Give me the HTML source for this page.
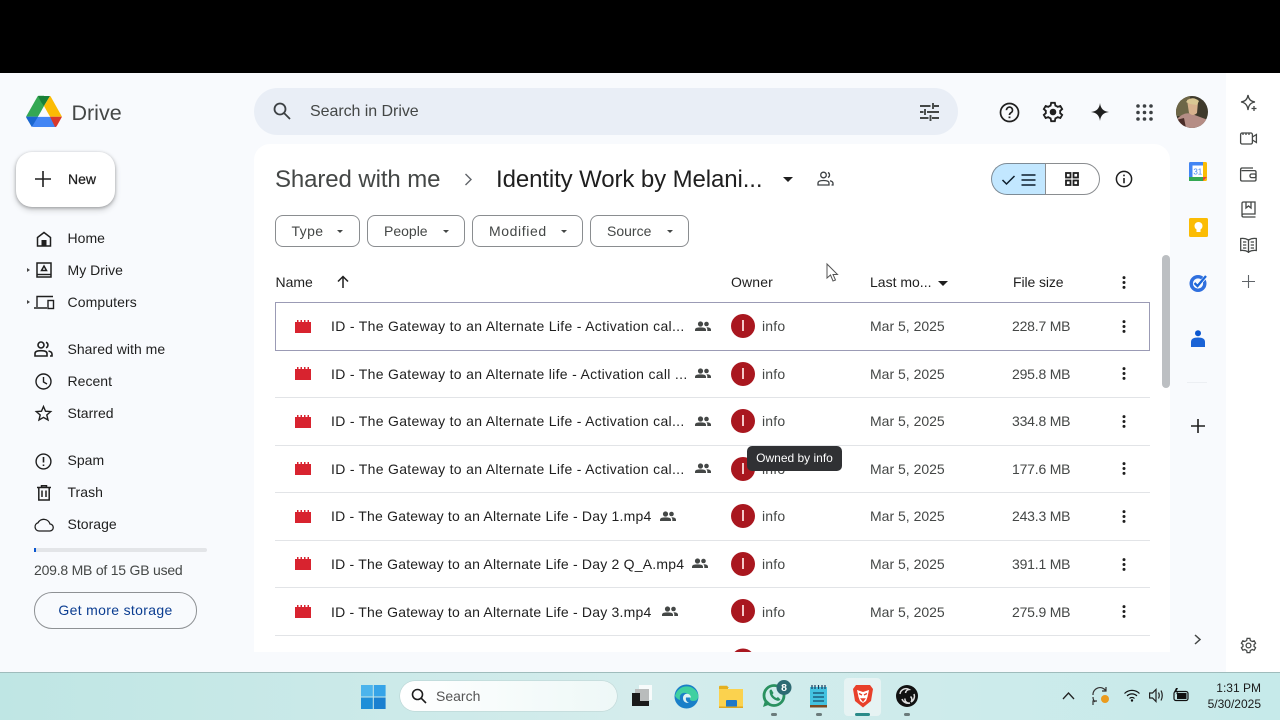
<!DOCTYPE html>
<html><head><meta charset="utf-8"><style>
html,body{margin:0;padding:0;width:1280px;height:720px;overflow:hidden;background:#f8fafd;font-family:"Liberation Sans",sans-serif;color:#1f1f1f}
.a{position:absolute;white-space:nowrap}
svg{position:absolute;overflow:visible}
.nav{position:absolute;left:67.5px;font-size:14px;color:#1f1f1f;line-height:20px;letter-spacing:.03px}
.row{position:absolute;left:275px;width:875px;height:47px;border-bottom:1px solid #e2e4e7}
.nm{position:absolute;left:56px;top:14px;font-size:14px;line-height:20px;color:#1f1f1f;white-space:nowrap;letter-spacing:.21px}
.nm.l{letter-spacing:.31px}
.av{position:absolute;left:456px;top:12px;width:24px;height:24px;border-radius:50%;background:#a9171f}
.av:after{content:"";position:absolute;left:11px;top:6px;width:1.6px;height:11px;background:#f3c9c9}
.inf{position:absolute;left:487px;top:14px;font-size:14px;line-height:20px;color:#444746;letter-spacing:.2px}
.dt{position:absolute;left:595px;top:14px;font-size:14px;line-height:20px;color:#444746;letter-spacing:0}
.sz{position:absolute;left:737px;top:14px;font-size:14px;line-height:20px;color:#444746;letter-spacing:-.2px}
.chip{position:absolute;top:215px;height:30px;border:1px solid #8a8d90;border-radius:8px;background:#fff;font-size:14px;line-height:30px;color:#444746;box-sizing:content-box}
.chip span{position:absolute;left:16px;top:0}
.chip i{position:absolute;top:14px;border-left:3.5px solid transparent;border-right:3.5px solid transparent;border-top:3.5px solid #444746}
.hd{position:absolute;top:272px;font-size:14px;line-height:20px;color:#1f1f1f}
</style></head><body>
<div class="a" style="left:0;top:0;width:1280px;height:73px;background:#000"></div>
<div class="a" style="left:0;top:73px;width:1280px;height:599px;background:#f8fafd"></div>
<div class="a" style="left:1226px;top:73px;width:54px;height:599px;background:#fff"></div>
<div class="a" style="left:254px;top:144px;width:916px;height:508px;background:#fff;border-radius:16px 16px 0 0"></div>

<!-- logo -->
<svg style="left:26px;top:95px" width="36" height="33" viewBox="0 0 36 33">
<path d="M11.500 1.500Q12 .8 13 .8H18V11L12 21.800H0Z" fill="#34a853"/>
<path d="M12 1H24L18 11 15 7Z" fill="#188038"/>
<path d="M24 1Q24.400 1.200 24.800 1.800L36 21.800H24L18 11Z" fill="#fbbc04"/>
<path d="M12 21.800H24L30.200 32H7.500Q6.300 32 5.800 31.400L0 21.800Z" fill="#4285f4"/>
<path d="M0 21.800H7.500L12 21.800 5.800 32 .5 23Z" fill="#1a66cf"/>
<path d="M24 21.800H36L30.800 31Q30.300 32 29 32Z" fill="#d9382c"/>
<path d="M18 12.300 24 21.800H12Z" fill="#f8fafd"/>
</svg>
<div class="a" style="left:71.5px;top:99px;font-size:21.5px;line-height:28px;color:#444746">Drive</div>

<!-- New -->
<div class="a" style="left:16px;top:152px;width:99px;height:55px;background:#fff;border-radius:16px;box-shadow:0 1px 3px rgba(0,0,0,.3),0 3px 6px 1px rgba(0,0,0,.13)"></div>
<svg style="left:35px;top:171px" width="16" height="16"><path d="M8 0V16M0 8H16" stroke="#1f1f1f" stroke-width="1.6"/></svg>
<div class="a" style="left:68px;top:169px;font-size:14px;line-height:20px;font-weight:400;color:#1f1f1f;-webkit-text-stroke:.25px #1f1f1f">New</div>

<!-- sidebar icons -->
<svg style="left:36px;top:231px" width="16" height="16" fill="none" stroke="#1f1f1f" stroke-width="1.5"><path d="M1.500 6.500 8 1.500 14.500 6.500V15H1.500Z"/><rect x="5.500" y="9" width="5" height="6" fill="#1f1f1f" stroke="none"/></svg>
<div class="nav" style="top:228px">Home</div>
<div class="a" style="left:27px;top:268px;border-left:3px solid #444;border-top:2.5px solid transparent;border-bottom:2.5px solid transparent"></div>
<svg style="left:36px;top:262px" width="16" height="16" fill="none" stroke="#1f1f1f" stroke-width="1.5"><rect x="1" y="1" width="14" height="14"/><path d="M1 12.500H15" stroke-width="1.400"/><path d="M8 4 10.500 8.500H5.500Z" stroke-width="1.500"/></svg>
<div class="nav" style="top:260px">My Drive</div>
<div class="a" style="left:27px;top:300px;border-left:3px solid #444;border-top:2.5px solid transparent;border-bottom:2.5px solid transparent"></div>
<svg style="left:34px;top:295px" width="21" height="15" fill="none" stroke="#1f1f1f" stroke-width="1.4"><path d="M3 12V1.500H19M0 13H13"/><rect x="14" y="5.500" width="5.500" height="8"/></svg>
<div class="nav" style="top:291.5px;letter-spacing:.1px">Computers</div>
<svg style="left:34px;top:341px" width="19" height="16" fill="none" stroke="#1f1f1f" stroke-width="1.600"><circle cx="7" cy="4" r="3"/><path d="M1 15V12.500Q1 9.700 7 9.700T13 12.500V15ZM12 1.200A3 3 0 0 1 12 6.800M14.500 10Q18 10.800 18 13V15H16"/></svg>
<div class="nav" style="top:339px">Shared with me</div>
<svg style="left:35px;top:373px" width="17" height="17" fill="none" stroke="#1f1f1f" stroke-width="1.4"><circle cx="8.500" cy="8.500" r="7.500"/><path d="M8.500 4V9L12 11"/></svg>
<div class="nav" style="top:371px">Recent</div>
<svg style="left:35px;top:405px" width="17" height="16" fill="none" stroke="#1f1f1f" stroke-width="1.4"><path d="M8.500 1.500 10.500 6.200 15.700 6.600 11.800 10 13 15 8.500 12.400 4 15 5.200 10 1.300 6.600 6.500 6.200Z"/></svg>
<div class="nav" style="top:403px">Starred</div>
<svg style="left:35px;top:453px" width="17" height="17" fill="none" stroke="#1f1f1f" stroke-width="1.4"><circle cx="8.500" cy="8.500" r="7.400"/><path d="M8.500 4V9.500M8.500 11.500V13" stroke-width="1.600"/></svg>
<div class="nav" style="top:450px">Spam</div>
<svg style="left:37px;top:485px" width="14" height="16" fill="none" stroke="#1f1f1f" stroke-width="1.5"><path d="M0 2.500H14M4.500 2.500V.7H9.500V2.500M1.800 2.500V15H12.200V2.500M5 5.500V12M9 5.500V12"/></svg>
<div class="nav" style="top:482px">Trash</div>
<svg style="left:34px;top:518px" width="20" height="14" fill="none" stroke="#1f1f1f" stroke-width="1.3"><path d="M5 13H15.500A3.500 3.500 0 0 0 16 6 6.500 6.500 0 0 0 4 4.800 4.200 4.200 0 0 0 5 13Z"/></svg>
<div class="nav" style="top:514px">Storage</div>
<div class="a" style="left:34px;top:548px;width:173px;height:4px;background:#e3e5e8;border-radius:2px"></div>
<div class="a" style="left:34px;top:548px;width:2px;height:4px;background:#0b57d0"></div>
<div class="a" style="left:34px;top:560px;font-size:14px;line-height:20px;color:#444746;letter-spacing:-.22px">209.8 MB of 15 GB used</div>
<div class="a" style="left:34px;top:592px;width:161px;height:35px;border:1px solid #8e9194;border-radius:18px;text-align:center;line-height:35px;font-size:14px;color:#0b3d91;letter-spacing:.33px">Get more storage</div>

<!-- search -->
<div class="a" style="left:254px;top:88px;width:704px;height:47px;background:#e9eef6;border-radius:24px"></div>
<svg style="left:273px;top:102px" width="18" height="18" fill="none" stroke="#3c4043" stroke-width="1.8"><circle cx="7" cy="7" r="5.500"/><path d="M11 11 17 17"/></svg>
<div class="a" style="left:310px;top:102px;font-size:16px;line-height:20px;color:#444746;letter-spacing:-.05px">Search in Drive</div>
<svg style="left:920px;top:103px" width="19" height="18" fill="none" stroke="#444746" stroke-width="1.9"><path d="M0 3H10.500M14 3H19M13 0V6M0 9H3.500M7 9H19M5 6V12M0 15H8.500M12 15H19M10.500 12V18"/></svg>

<!-- top right -->
<svg style="left:999px;top:102px" width="21" height="21" fill="none" stroke="#1f1f1f" stroke-width="1.7"><circle cx="10.500" cy="10.500" r="9"/><path d="M7.500 8.200A3 3 0 1 1 12 10.700C11 11.300 10.500 11.800 10.500 13"/><path d="M10.500 14.500V16.200" stroke-width="1.900"/></svg>
<svg style="left:1042px;top:101px" width="22" height="22" viewBox="0 0 24 24" fill="none" stroke="#1f1f1f" stroke-width="2"><path d="M10 2H14L14.600 5Q16 5.500 17.200 6.400L20 5.400 22 8.800 19.800 10.800Q20 12 19.800 13.200L22 15.200 20 18.600 17.200 17.600Q16 18.500 14.600 19L14 22H10L9.400 19Q8 18.500 6.800 17.600L4 18.600 2 15.200 4.200 13.200Q4 12 4.200 10.800L2 8.800 4 5.400 6.800 6.400Q8 5.500 9.400 5Z"/><circle cx="12" cy="12" r="3.600" fill="#1f1f1f" stroke="none"/></svg>
<svg style="left:1091px;top:103px" width="18" height="18"><path d="M9 0C9.600 5.500 12.500 8.400 18 9 12.500 9.600 9.600 12.500 9 18 8.400 12.500 5.500 9.600 0 9 5.500 8.400 8.400 5.500 9 0Z" fill="#1f1f1f"/></svg>
<svg style="left:1136px;top:104px" width="17" height="17" fill="#3c4043"><circle cx="2" cy="2" r="1.800"/><circle cx="8.500" cy="2" r="1.800"/><circle cx="15" cy="2" r="1.800"/><circle cx="2" cy="8.500" r="1.800"/><circle cx="8.500" cy="8.500" r="1.800"/><circle cx="15" cy="8.500" r="1.800"/><circle cx="2" cy="15" r="1.800"/><circle cx="8.500" cy="15" r="1.800"/><circle cx="15" cy="15" r="1.800"/></svg>
<svg style="left:1176px;top:96px" width="32" height="32"><defs><clipPath id="c"><circle cx="16" cy="16" r="16"/></clipPath></defs><g clip-path="url(#c)"><rect width="32" height="32" fill="#3f3a2c"/><rect x="0" y="0" width="14" height="20" fill="#6d6647"/><path d="M0 32V24Q8 15 16 18T32 24V32Z" fill="#b58d85"/><path d="M11 4Q18 0 22 6L21 17Q17 21 13 17Z" fill="#d8b28e"/><path d="M10 6Q16 -1 23 5L21 9 14 8Z" fill="#d9c793"/><path d="M0 24 8 22 10 32H0Z" fill="#4a2d28"/></g></svg>

<!-- breadcrumb -->
<div class="a" style="left:275px;top:164px;font-size:24px;line-height:32px;color:#444746;letter-spacing:-.1px">Shared with me</div>
<svg style="left:464px;top:173px" width="8" height="13" fill="none" stroke="#5f6368" stroke-width="1.400"><path d="M1.500 1 7 6.500 1.500 12"/></svg>
<div class="a" style="left:496px;top:164px;font-size:24px;line-height:32px;color:#1f1f1f;letter-spacing:-.1px">Identity Work by Melani...</div>
<div class="a" style="left:783px;top:177px;border-left:5px solid transparent;border-right:5px solid transparent;border-top:5px solid #1f1f1f"></div>
<svg style="left:817px;top:171px" width="17" height="16" fill="none" stroke="#3c4043" stroke-width="1.300"><circle cx="6.500" cy="4" r="2.800"/><path d="M1 14V12Q1 9.500 6.500 9.500T12 12V14ZM11 1.500A2.800 2.800 0 0 1 11 6.500M13 9.800Q16 10.500 16 12.500V14H14.500"/></svg>

<!-- view toggle -->
<div class="a" style="left:991px;top:163px;width:54px;height:30px;background:#c2e7ff;border:1px solid #7d8b96;border-right:none;border-radius:16px 0 0 16px"></div>
<div class="a" style="left:1045px;top:163px;width:53px;height:30px;background:#fff;border:1px solid #8a8d90;border-radius:0 16px 16px 0"></div>
<svg style="left:1002px;top:174px" width="34" height="12" fill="none" stroke="#0c1d2b" stroke-width="1.500"><path d="M0.500 6 4.500 10 12.500 2"/><path d="M19.500 1H33.500M19.500 6H33.500M19.500 11H33.500" stroke-width="1.600"/></svg>
<svg style="left:1065px;top:172px" width="14" height="14" fill="none" stroke="#1f1f1f" stroke-width="1.800"><rect x="1" y="1" width="4.500" height="4.500"/><rect x="8.500" y="1" width="4.500" height="4.500"/><rect x="1" y="8.500" width="4.500" height="4.500"/><rect x="8.500" y="8.500" width="4.500" height="4.500"/></svg>
<svg style="left:1115px;top:170px" width="18" height="18" fill="none" stroke="#1f1f1f" stroke-width="1.500"><circle cx="9" cy="9" r="7.600"/><path d="M9 8V13.300M9 4.600V6.300" stroke-width="1.600"/></svg>

<!-- chips -->
<div class="chip" style="left:275px;width:83px"><span style="left:15.500px;letter-spacing:.4px">Type</span><i style="left:61px"></i></div>
<div class="chip" style="left:367px;width:96px"><span>People</span><i style="left:75px"></i></div>
<div class="chip" style="left:472px;width:109px"><span style="letter-spacing:.6px">Modified</span><i style="left:88px"></i></div>
<div class="chip" style="left:590px;width:97px"><span>Source</span><i style="left:76px"></i></div>

<!-- header -->
<div class="hd" style="left:275.500px">Name</div>
<svg style="left:337px;top:275px" width="12" height="13" fill="none" stroke="#1f1f1f" stroke-width="1.500"><path d="M6 13V1.500M1 6.500 6 1.500 11 6.500"/></svg>
<div class="hd" style="left:731px;letter-spacing:.15px">Owner</div>
<div class="hd" style="left:870px">Last mo...</div>
<div class="a" style="left:938px;top:281px;border-left:5px solid transparent;border-right:5px solid transparent;border-top:5px solid #1f1f1f"></div>
<div class="hd" style="left:1013px;letter-spacing:-.1px">File size</div>
<svg style="left:1122px;top:276px" width="4" height="13" fill="#1f1f1f"><circle cx="2" cy="1.600" r="1.500"/><circle cx="2" cy="6.500" r="1.500"/><circle cx="2" cy="11.400" r="1.500"/></svg>

<!-- symbol defs -->
<svg width="0" height="0" style="position:absolute"><defs>
<g id="film"><path d="M0 2H2V0H3.500V2H5.500V0H7V2H9V0H10.500V2H12.500V0H14V2H16V13H0Z" fill="#d8232f"/></g>
<g id="ppl" fill="#444746"><circle cx="5.500" cy="3" r="2.600"/><circle cx="11.500" cy="3" r="2.300"/><path d="M0 10V8.600Q0 6.400 5.500 6.400T11 8.600V10ZM12.300 10V8.400Q12.300 7.200 11.400 6.300 16 6.400 16 8.600V10Z"/></g>
<g id="dots" fill="#1f1f1f"><circle cx="2" cy="1.600" r="1.500"/><circle cx="2" cy="6.500" r="1.500"/><circle cx="2" cy="11.400" r="1.500"/></g>
</defs></svg>

<!-- rows -->
<div class="row" style="top:302px;height:47px;border:1px solid #9b9bb5;box-sizing:content-box;width:873px;z-index:2;background:#fff">
<svg style="left:19px;top:17px" width="16" height="13"><use href="#film"/></svg>
<div class="nm l" style="top:13px;left:55px">ID - The Gateway to an Alternate Life - Activation cal...</div>
<svg style="left:419px;top:18px" width="16" height="10"><use href="#ppl"/></svg>
<div class="av" style="left:455px;top:11px"></div><div class="inf" style="left:486px;top:13px">info</div><div class="dt" style="left:594px;top:13px">Mar 5, 2025</div><div class="sz" style="left:736px;top:13px">228.7 MB</div>
<svg style="left:846px;top:17px" width="4" height="13"><use href="#dots"/></svg>
</div>
<div class="row" style="top:350px">
<svg style="left:20px;top:17px" width="16" height="13"><use href="#film"/></svg>
<div class="nm l" style="top:13.500px">ID - The Gateway to an Alternate life - Activation call ...</div>
<svg style="left:420px;top:18px" width="16" height="10"><use href="#ppl"/></svg>
<div class="av"></div><div class="inf" style="top:13.500px">info</div><div class="dt" style="top:13.500px">Mar 5, 2025</div><div class="sz" style="top:13.500px">295.8 MB</div>
<svg style="left:847px;top:17px" width="4" height="13"><use href="#dots"/></svg>
</div>
<div class="row" style="top:398px">
<svg style="left:20px;top:17px" width="16" height="13"><use href="#film"/></svg>
<div class="nm l" style="top:13px">ID - The Gateway to an Alternate Life - Activation cal...</div>
<svg style="left:420px;top:18px" width="16" height="10"><use href="#ppl"/></svg>
<div class="av" style="top:11px"></div><div class="inf" style="top:13px">info</div><div class="dt" style="top:13px">Mar 5, 2025</div><div class="sz" style="top:13px">334.8 MB</div>
<svg style="left:847px;top:17px" width="4" height="13"><use href="#dots"/></svg>
</div>
<div class="row" style="top:445px">
<svg style="left:20px;top:17px" width="16" height="13"><use href="#film"/></svg>
<div class="nm l" style="top:13.500px">ID - The Gateway to an Alternate Life - Activation cal...</div>
<svg style="left:420px;top:18px" width="16" height="10"><use href="#ppl"/></svg>
<div class="av"></div><div class="inf" style="top:13.500px">info</div><div class="dt" style="top:13.500px">Mar 5, 2025</div><div class="sz" style="top:13.500px">177.6 MB</div>
<svg style="left:847px;top:17px" width="4" height="13"><use href="#dots"/></svg>
</div>
<div class="row" style="top:493px">
<svg style="left:20px;top:17px" width="16" height="13"><use href="#film"/></svg>
<div class="nm" style="top:13px">ID - The Gateway to an Alternate Life - Day 1.mp4</div>
<svg style="left:385px;top:18px" width="16" height="10"><use href="#ppl"/></svg>
<div class="av" style="top:11px"></div><div class="inf" style="top:13px">info</div><div class="dt" style="top:13px">Mar 5, 2025</div><div class="sz" style="top:13px">243.3 MB</div>
<svg style="left:847px;top:17px" width="4" height="13"><use href="#dots"/></svg>
</div>
<div class="row" style="top:540px">
<svg style="left:20px;top:17px" width="16" height="13"><use href="#film"/></svg>
<div class="nm">ID - The Gateway to an Alternate Life - Day 2 Q_A.mp4</div>
<svg style="left:417px;top:18px" width="16" height="10"><use href="#ppl"/></svg>
<div class="av"></div><div class="inf">info</div><div class="dt">Mar 5, 2025</div><div class="sz">391.1 MB</div>
<svg style="left:847px;top:18px" width="4" height="13"><use href="#dots"/></svg>
</div>
<div class="row" style="top:588px">
<svg style="left:20px;top:17px" width="16" height="13"><use href="#film"/></svg>
<div class="nm" style="top:13.500px">ID - The Gateway to an Alternate Life - Day 3.mp4</div>
<svg style="left:387px;top:18px" width="16" height="10"><use href="#ppl"/></svg>
<div class="av" style="top:11px"></div><div class="inf" style="top:13.500px">info</div><div class="dt" style="top:13.500px">Mar 5, 2025</div><div class="sz" style="top:13.500px">275.9 MB</div>
<svg style="left:847px;top:17px" width="4" height="13"><use href="#dots"/></svg>
</div>
<svg style="left:731px;top:648px" width="24" height="4"><path d="M3.500 4A12 12 0 0 1 20.500 4Z" fill="#a9171f"/></svg>

<!-- tooltip -->
<div class="a" style="left:747px;top:446px;width:95px;height:25px;background:#303134;border-radius:5px;color:#fff;font-size:12px;line-height:25px;text-align:center;z-index:5">Owned by info</div>

<!-- scrollbar -->
<div class="a" style="left:1162px;top:255px;width:8px;height:133px;background:#bcbfc2;border-radius:4px"></div>

<!-- cursor -->
<svg style="left:826px;top:263px;z-index:6" width="13" height="19" fill="#fff" stroke="#555" stroke-width="1"><path d="M1 1V15L4.500 12 7 18 9.500 17 7 11.500H11.500Z"/></svg>

<!-- right side panel icons -->
<svg style="left:1189px;top:162px" width="18" height="19"><rect width="18" height="19" rx="1.500" fill="#fbbc04"/><path d="M0 1.500Q0 0 1.500 0H14V3.500H3.500V15H0Z" fill="#4285f4"/><rect x="0" y="15" width="14" height="4" fill="#34a853"/><rect x="3.500" y="3.500" width="10.500" height="11.500" fill="#fff"/><path d="M14 15H18L14 19Z" fill="#ea4335"/><text x="8.800" y="12.500" font-size="8" text-anchor="middle" fill="#4285f4" font-family="Liberation Sans">31</text></svg>
<svg style="left:1189px;top:218px" width="19" height="19"><rect width="19" height="19" rx="1.500" fill="#fbbc04"/><circle cx="9.500" cy="8" r="4" fill="#fff"/><rect x="7.500" y="11" width="4" height="3" fill="#fff"/></svg>
<svg style="left:1189px;top:274px" width="18" height="18" fill="none"><circle cx="9" cy="9.500" r="6.800" stroke="#2f6fde" stroke-width="3.400"/><path d="M5.500 9 8.500 12 16.500 3" stroke="#fff" stroke-width="3.500"/><path d="M5.500 9 8.500 12 17 2" stroke="#1b66d9" stroke-width="2.300"/></svg>
<svg style="left:1191px;top:330px" width="14" height="17"><circle cx="7" cy="3.200" r="3" fill="#0b57d0"/><path d="M0 17V12Q0 7.500 7 7.500T14 12V17Z" fill="#1a63d6"/></svg>
<div class="a" style="left:1187px;top:382px;width:20px;height:1px;background:#eceff3"></div>
<svg style="left:1191px;top:419px" width="14" height="14"><path d="M7 0V14M0 7H14" stroke="#1f1f1f" stroke-width="1.600"/></svg>
<svg style="left:1194px;top:634px" width="7" height="11" fill="none" stroke="#444746" stroke-width="1.500"><path d="M1 1 6 5.500 1 10"/></svg>

<!-- far right -->
<svg style="left:1240px;top:94px" width="17" height="18" fill="none" stroke="#444746" stroke-width="1.300"><path d="M8 1C8.500 5 10.800 7.500 15 8 10.800 8.500 8.500 11 8 16 7.500 11 5 8.500 1 8 5 7.500 7.500 5 8 1Z"/><path d="M14 12V17M11.500 14.500H16.500"/></svg>
<svg style="left:1240px;top:132px" width="17" height="13" fill="none" stroke="#444746" stroke-width="1.300"><rect x=".6" y="1" width="11.800" height="11" rx="1.500"/><path d="M12.400 5 16.400 2.500V10.500L12.400 8M3 1V3M6 1V3M9 1V3"/></svg>
<svg style="left:1240px;top:167px" width="17" height="15" fill="none" stroke="#444746" stroke-width="1.300"><path d="M13 1H2Q.6 1 .6 3V12.500Q.6 14 2 14H14.500Q16 14 16 12.500V5Q16 3.600 14.500 3.600H1.500"/><rect x="10" y="7" width="6" height="3.600" rx="1.500"/></svg>
<svg style="left:1241px;top:201px" width="15" height="17" fill="none" stroke="#444746" stroke-width="1.300"><path d="M2.500 1H14V13H2.500Q1 13 1 14.500V2.500Q1 1 2.500 1ZM1 14.500Q1 16 2.500 16H14.500M5 1V7L7.500 5 10 7V1"/></svg>
<svg style="left:1240px;top:237px" width="17" height="17" fill="none" stroke="#444746" stroke-width="1.300"><path d="M8.500 3Q5 1 .7 1.500V13.500Q5 13 8.500 15 12 13 16.300 13.500V1.500Q12 1 8.500 3ZM8.500 3V16M3 5H6.300M3 8H6.300M3 11H6.300M10.700 5H14M10.700 8H14M10.700 11H14"/></svg>
<svg style="left:1242px;top:275px" width="13" height="13"><path d="M6.500 0V13M0 6.500H13" stroke="#5f6368" stroke-width="1.100"/></svg>
<svg style="left:1240px;top:637px" width="17" height="17" viewBox="0 0 24 24" fill="none" stroke="#444746" stroke-width="1.800"><path d="M10 2H14L14.600 5Q16 5.500 17.200 6.400L20 5.400 22 8.800 19.800 10.800Q20 12 19.800 13.200L22 15.200 20 18.600 17.200 17.600Q16 18.500 14.600 19L14 22H10L9.400 19Q8 18.500 6.800 17.600L4 18.600 2 15.200 4.200 13.200Q4 12 4.200 10.800L2 8.800 4 5.400 6.800 6.400Q8 5.500 9.400 5Z"/><circle cx="12" cy="12" r="3.400"/></svg>

<!-- taskbar -->
<div class="a" style="left:0;top:672px;width:1280px;height:48px;background:linear-gradient(90deg,#bfe6e4,#d4ecec 50%,#c6eaea);border-top:1px solid #9fbcbc;box-sizing:border-box"></div>
<svg style="left:361px;top:685px" width="25" height="24"><rect width="11.800" height="11.500" fill="#4cb4ec"/><rect x="12.800" width="11.800" height="11.500" fill="#36a4e8"/><rect y="12.500" width="11.800" height="11.500" fill="#1f8fd8"/><rect x="12.800" y="12.500" width="11.800" height="11.500" fill="#1a80d0"/></svg>
<div class="a" style="left:400px;top:681px;width:217px;height:30px;border-radius:15px;background:linear-gradient(90deg,#fff,#eef8f7);box-shadow:0 0 1px rgba(0,0,0,.35)"></div>
<svg style="left:411px;top:688px" width="16" height="16" fill="none" stroke="#1c1c1c" stroke-width="1.600"><circle cx="6.500" cy="6.500" r="5"/><path d="M10.300 10.300 15 15"/></svg>
<div class="a" style="left:436px;top:688px;font-size:14px;line-height:17px;color:#555">Search</div>
<svg style="left:631px;top:684px" width="24" height="24"><rect x="8" y="1" width="13" height="15" fill="#fff" opacity=".8"/><rect x="4" y="5" width="14" height="14" fill="#b9bcbc"/><path d="M1 9H9V17H18V22H1Z" fill="#1a1a1a"/></svg>
<svg style="left:674px;top:684px" width="25" height="25"><circle cx="12.500" cy="12.500" r="12" fill="#1a7fc8"/><path d="M1 12A12 12 0 0 1 24.500 12Q24 17 19 17 15 17 16 13 14 8 9 9 5 10 6 16 3 15 1 12Z" fill="#3fd0a0"/><path d="M12 7A8 8 0 0 0 4 14 10 10 0 0 1 21 10 9 9 0 0 0 12 7Z" fill="#4fc7c7"/><path d="M9 14A4 4 0 0 1 17 13.500H12Q11 17 15 19 9 19 9 14Z" fill="#dff2f2"/></svg>
<svg style="left:718px;top:685px" width="26" height="23"><path d="M1 2Q1 .8 2 .8H9L11 3H10V5H1Z" fill="#e4b020"/><rect x="1" y="4" width="24" height="18" fill="#fbd24e"/><rect x="8" y="15" width="11" height="7" rx="1" fill="#1f78c8"/><rect x="1" y="21.500" width="24" height="1.500" fill="#e0a820"/></svg>
<svg style="left:761px;top:680px" width="30" height="28"><circle cx="13" cy="15.500" r="10" fill="none" stroke="#2a9160" stroke-width="2.800"/><path d="M2 27 4.500 19 10 24Z" fill="#2a9160"/><path d="M8.500 11.500Q8.500 9.500 10.500 9.500L12.500 13 11.500 14.500Q13 17 15.500 18L17 17 19.500 19.500Q18 21.500 15.500 20.500 9 18 8.500 11.500Z" fill="#2a9160"/><circle cx="23" cy="7.500" r="7.500" fill="#2d6a73"/><text x="23" y="11" font-size="10.500" font-weight="bold" text-anchor="middle" fill="#fff" font-family="Liberation Sans">8</text></svg>
<svg style="left:808px;top:684px" width="22" height="25"><rect x="2" y="3" width="17" height="19" fill="#43c2e0"/><rect x="2" y="21" width="17" height="2.500" fill="#7b4a22"/><path d="M4 1V5M7 1V5M10.500 1V5M14 1V5M17 1V5" stroke="#1b3a5a" stroke-width="1.200"/><path d="M5 9H16M5 13H16M5 17H16" stroke="#1d5f7f" stroke-width="1.400"/></svg>
<div class="a" style="left:844px;top:678px;width:37px;height:38px;background:#e6f3f3;border-radius:4px"></div>
<svg style="left:852px;top:684px" width="22" height="24"><path d="M4 1H18L21 5 19 17 11 23.500 3 17 1 5Z" fill="#e8402a"/><path d="M5 6 11 8 17 6 15.500 13 14 17 11 19 8 17 6.500 13Z" fill="#fff"/><path d="M7 9.500 10 11M15 9.500 12 11M9.500 15H12.500L11 17Z" stroke="#e8402a" stroke-width="1.400" fill="#e8402a"/></svg>
<svg style="left:896px;top:685px" width="22" height="22" fill="none"><circle cx="11" cy="11" r="11" fill="#111"/><path d="M4 9A6 6 0 0 1 13 4.500 4 4 0 0 0 9.500 8M18 9A6.500 6.500 0 0 1 15 17 4 4 0 0 0 14.500 11.500M6 14A6.500 6.500 0 0 0 14 18 4 4 0 0 1 9 13.500" stroke="#ddd" stroke-width="1.500"/></svg>
<div class="a" style="left:771px;top:713px;width:6px;height:3px;background:#6b7b7b;border-radius:2px"></div>
<div class="a" style="left:816px;top:713px;width:6px;height:3px;background:#6b7b7b;border-radius:2px"></div>
<div class="a" style="left:855px;top:713px;width:15px;height:3px;background:#2a8a88;border-radius:2px"></div>
<div class="a" style="left:904px;top:713px;width:6px;height:3px;background:#6b7b7b;border-radius:2px"></div>

<!-- tray -->
<svg style="left:1062px;top:691px" width="13" height="9" fill="none" stroke="#222" stroke-width="1.300"><path d="M1 8 6.500 2 12 8"/></svg>
<svg style="left:1091px;top:686px" width="20" height="20" fill="none" stroke="#333" stroke-width="1.200"><path d="M2 9A7 7 0 0 1 15 5M15 1V5H11M2 11Q2 14 4 16M2 19V15H6"/><circle cx="14" cy="13" r="4" fill="#eb9b1d" stroke="none"/></svg>
<svg style="left:1124px;top:689px" width="16" height="13" fill="none" stroke="#111" stroke-width="1.200"><path d="M.5 4.500A10.500 10.500 0 0 1 15.500 4.500M3 7A7 7 0 0 1 13 7M5.500 9.500A3.500 3.500 0 0 1 10.500 9.500"/><circle cx="8" cy="11.500" r="1.200" fill="#111" stroke="none"/></svg>
<svg style="left:1149px;top:688px" width="16" height="15" fill="none" stroke="#222" stroke-width="1.200"><path d="M.6 5H3.500L7 1.500V13.500L3.500 10H.6ZM9.500 4.500Q11 7.500 9.500 10.500M12 2.500Q14.500 7.500 12 12.500"/></svg>
<svg style="left:1173px;top:688px" width="16" height="14"><rect x="1" y="3.500" width="14" height="9" rx="2" fill="none" stroke="#111" stroke-width="1.200"/><rect x="4" y="5" width="9.500" height="6" fill="#111"/><path d="M3 0 1 4H4L2.500 7 6 3H3.500L5 0Z" fill="#111"/></svg>
<div class="a" style="left:1200px;top:680px;width:61px;text-align:right;font-size:12px;line-height:16px;color:#1a1a1a">1:31 PM</div>
<div class="a" style="left:1200px;top:696px;width:61px;text-align:right;font-size:12px;line-height:16px;color:#1a1a1a">5/30/2025</div>
</body></html>
